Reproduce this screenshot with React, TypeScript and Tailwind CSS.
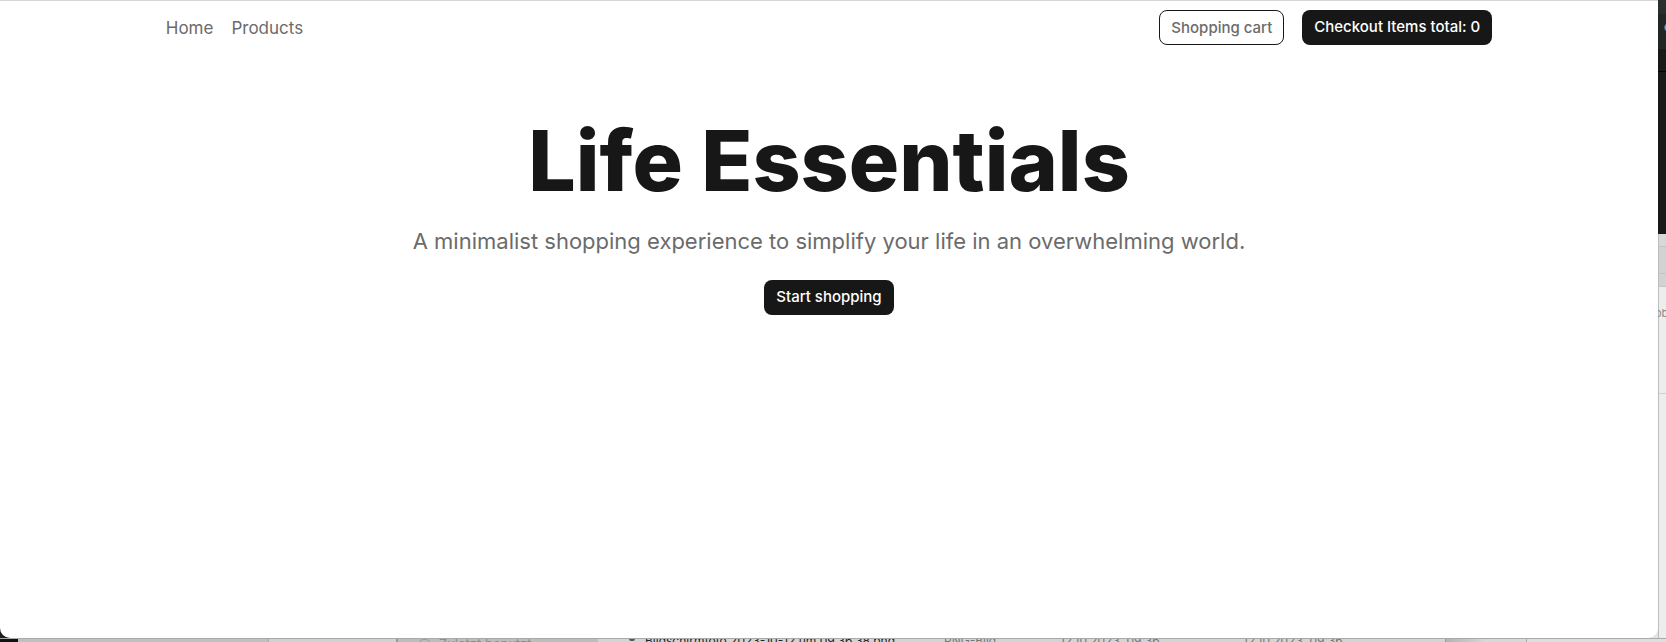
import type { ReactNode } from "react";

const button = "flex h-[35px] items-center rounded-lg text-[15px] font-medium";
const filled = "bg-[#171717] px-3 text-white";

function DesktopSide() {
  return (
    <aside className="flex w-2 shrink-0 flex-col overflow-hidden bg-[#ededed] text-[11px]">
      <div className="h-[14px] shrink-0 bg-[#2b2e2e]" />
      <div className="h-[35px] shrink-0 bg-[#222626] pl-[6px] leading-[26px] text-[#b5b5b5]">e</div>
      <div className="h-[185px] shrink-0 bg-[#191919]">
        <div className="h-[23px] border-b border-black" />
      </div>
      <div className="flex grow flex-col border-l border-[#bdbdbd]">
        <div className="h-[13px] shrink-0 border-b border-[#c4c4c4] bg-[#d8d8d8]" />
        <div className="h-[27px] shrink-0 border-b border-[#c4c4c4] bg-[#d2d2d2]" />
        <div className="h-[13px] shrink-0 border-b border-[#c4c4c4] bg-[#d2d2d2]" />
        <div className="h-[107px] shrink-0 border-b border-[#cfcfcf] pt-[18px] leading-4 text-[#8a8a8a]">
          <span className="-ml-1">ob</span>
        </div>
      </div>
    </aside>
  );
}

function Cell({ className, children }: { className: string; children?: ReactNode }) {
  return (
    <div className={`flex h-[3px] shrink-0 overflow-hidden whitespace-nowrap ${className}`}>
      {children}
    </div>
  );
}

function DesktopBottom() {
  return (
    <footer className="flex h-1 shrink-0 overflow-hidden border-t border-[#a9a9a9] bg-[#d4d4d4] text-[12px] leading-[3px] text-[#777]">
      <Cell className="w-[18px] bg-[#111]" />
      <Cell className="w-[251px] border-r border-[#aaa] bg-[#c0c0c0]" />
      <Cell className="w-[129px] border-r-2 border-[#999] bg-[#d2d2d2]" />
      <Cell className="w-[200px] gap-[9px] bg-[#bdbdbd] pl-[21px] text-[13px] leading-[11px] text-[#8d8d8d]">
        <span className="h-3 w-[11px] rounded-sm border border-[#8fa0b5]" />
        Zuletzt benutzt
      </Cell>
      <Cell className="w-[346px] gap-[10px] pl-[31px] text-[#222]">
        <span className="h-[2px] w-[6px] rounded-b-sm bg-[#4d5a66]" />
        Bildschirmfoto 2023-10-12 um 09.36.38.png
      </Cell>
      <Cell className="w-[116px]">PNG-Bild</Cell>
      <Cell className="w-[183px]">12.10.2023, 09:36</Cell>
      <Cell className="w-[203px] border-r border-[#999]">12.10.2023, 09:36</Cell>
      <Cell className="w-[81px] border-r border-[#aaa] bg-linear-to-r from-[#b3b3b3] to-[#d8d8d8] to-50%" />
      <Cell className="grow bg-[#dedede]" />
    </footer>
  );
}

export default function App() {
  return (
    <div className="flex h-screen flex-col overflow-hidden bg-[#ededed] font-['Inter','Liberation_Sans',sans-serif]">
      <div className="flex min-h-0 grow">
        <div className="flex min-w-0 grow bg-linear-to-r from-[#1b1f1b] from-50% to-[#e4e4e4] to-50%">
          <div className="grow rounded-b-[10px] border-t border-[#d6d6d6] bg-white">
            <header className="mx-auto flex w-4/5 items-center justify-between pt-[9px] text-[#6b6b6b]">
              <nav className="flex gap-[18px] pt-[2px] text-[17px]">
                <a href="#home">Home</a>
                <a href="#products">Products</a>
              </nav>
              <div className="flex gap-[18px]">
                <button className={`border border-[#171717] px-[11px] pt-[2px] ${button}`}>
                  Shopping cart
                </button>
                <button className={`${button} ${filled}`}>Checkout Items total: 0</button>
              </div>
            </header>
            <main className="flex flex-col items-center pt-[66px]">
              <h1 className="text-[84px] leading-[100px] font-extrabold text-[#171717]">Life Essentials</h1>
              <p className="mt-[14px] text-[22px] leading-[32px] text-[#6b6b6b]">
                A minimalist shopping experience to simplify your life in an overwhelming world.
              </p>
              <button className={`mt-[23px] ${button} ${filled}`}>Start shopping</button>
            </main>
          </div>
        </div>
        <DesktopSide />
      </div>
      <DesktopBottom />
    </div>
  );
}
